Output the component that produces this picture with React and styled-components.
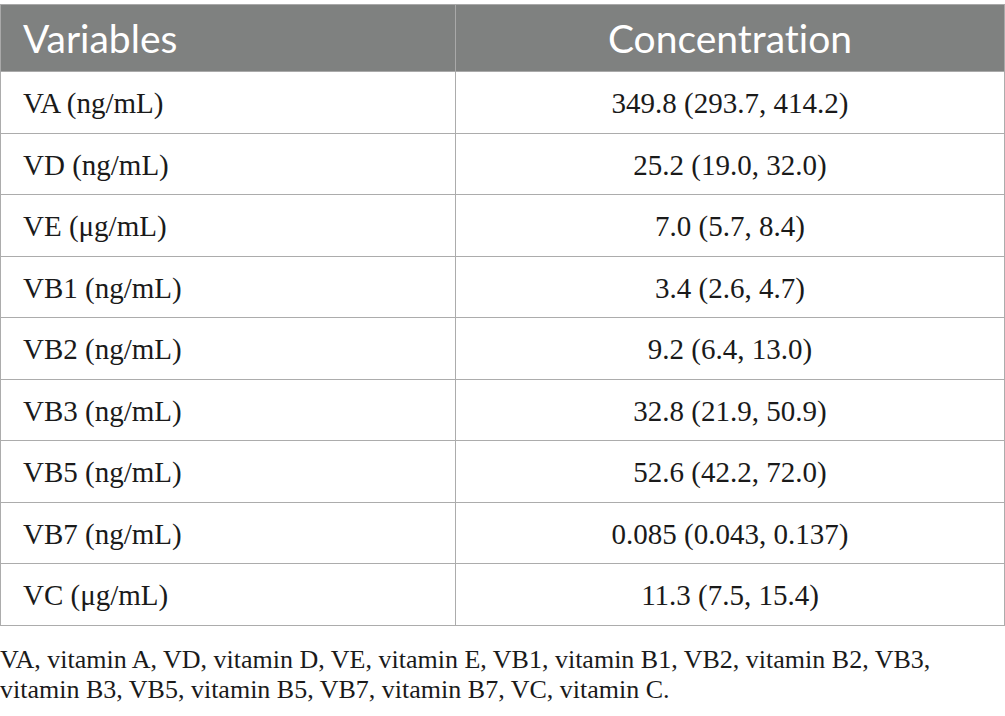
import React from "react";
import styled, { createGlobalStyle } from "styled-components";

const GlobalStyle = createGlobalStyle`
  body {
    margin: 0;
    background: #fff;
  }
`;

const Page = styled.div`
  width: 1005px;
  padding-top: 4px;
`;

const Table = styled.table`
  width: 1005px;
  border-collapse: collapse;
  table-layout: fixed;
`;

const HeadCell = styled.th`
  box-sizing: border-box;
  height: 67px;
  padding: 0 22px;
  background: #7f8180;
  color: #fff;
  font-family: Lato, "Open Sans", sans-serif;
  font-weight: 400;
  font-size: 39px;
  font-variant-ligatures: none;
  text-align: ${({ align }) => align || "left"};
  border: 1px solid #a9a9a9;
  width: ${({ w }) => w || "auto"};
`;

const Cell = styled.td`
  height: 57.5px;
  padding: 3px 22px 0;
  font-family: "Liberation Serif", "Times New Roman", serif;
  font-size: 29px;
  color: #1a1a1a;
  text-align: ${({ align }) => align || "left"};
  border: 1px solid #acacac;
`;

const Note = styled.p`
  margin: 19px 0 0;
  font-family: "Liberation Serif", "Times New Roman", serif;
  font-size: 26px;
  line-height: 30px;
  color: #1a1a1a;
`;

const rows = [
  ["VA (ng/mL)", "349.8 (293.7, 414.2)"],
  ["VD (ng/mL)", "25.2 (19.0, 32.0)"],
  ["VE (μg/mL)", "7.0 (5.7, 8.4)"],
  ["VB1 (ng/mL)", "3.4 (2.6, 4.7)"],
  ["VB2 (ng/mL)", "9.2 (6.4, 13.0)"],
  ["VB3 (ng/mL)", "32.8 (21.9, 50.9)"],
  ["VB5 (ng/mL)", "52.6 (42.2, 72.0)"],
  ["VB7 (ng/mL)", "0.085 (0.043, 0.137)"],
  ["VC (μg/mL)", "11.3 (7.5, 15.4)"],
];

export default function App() {
  return (
    <Page>
      <GlobalStyle />
      <Table>
        <thead>
          <tr>
            <HeadCell w="455px">Variables</HeadCell>
            <HeadCell align="center">Concentration</HeadCell>
          </tr>
        </thead>
        <tbody>
          {rows.map(([name, value]) => (
            <tr key={name}>
              <Cell>{name}</Cell>
              <Cell align="center">{value}</Cell>
            </tr>
          ))}
        </tbody>
      </Table>
      <Note>
        VA, vitamin A, VD, vitamin D, VE, vitamin E, VB1, vitamin B1, VB2,
        vitamin B2, VB3, vitamin B3, VB5, vitamin B5, VB7, vitamin B7, VC,
        vitamin C.
      </Note>
    </Page>
  );
}
